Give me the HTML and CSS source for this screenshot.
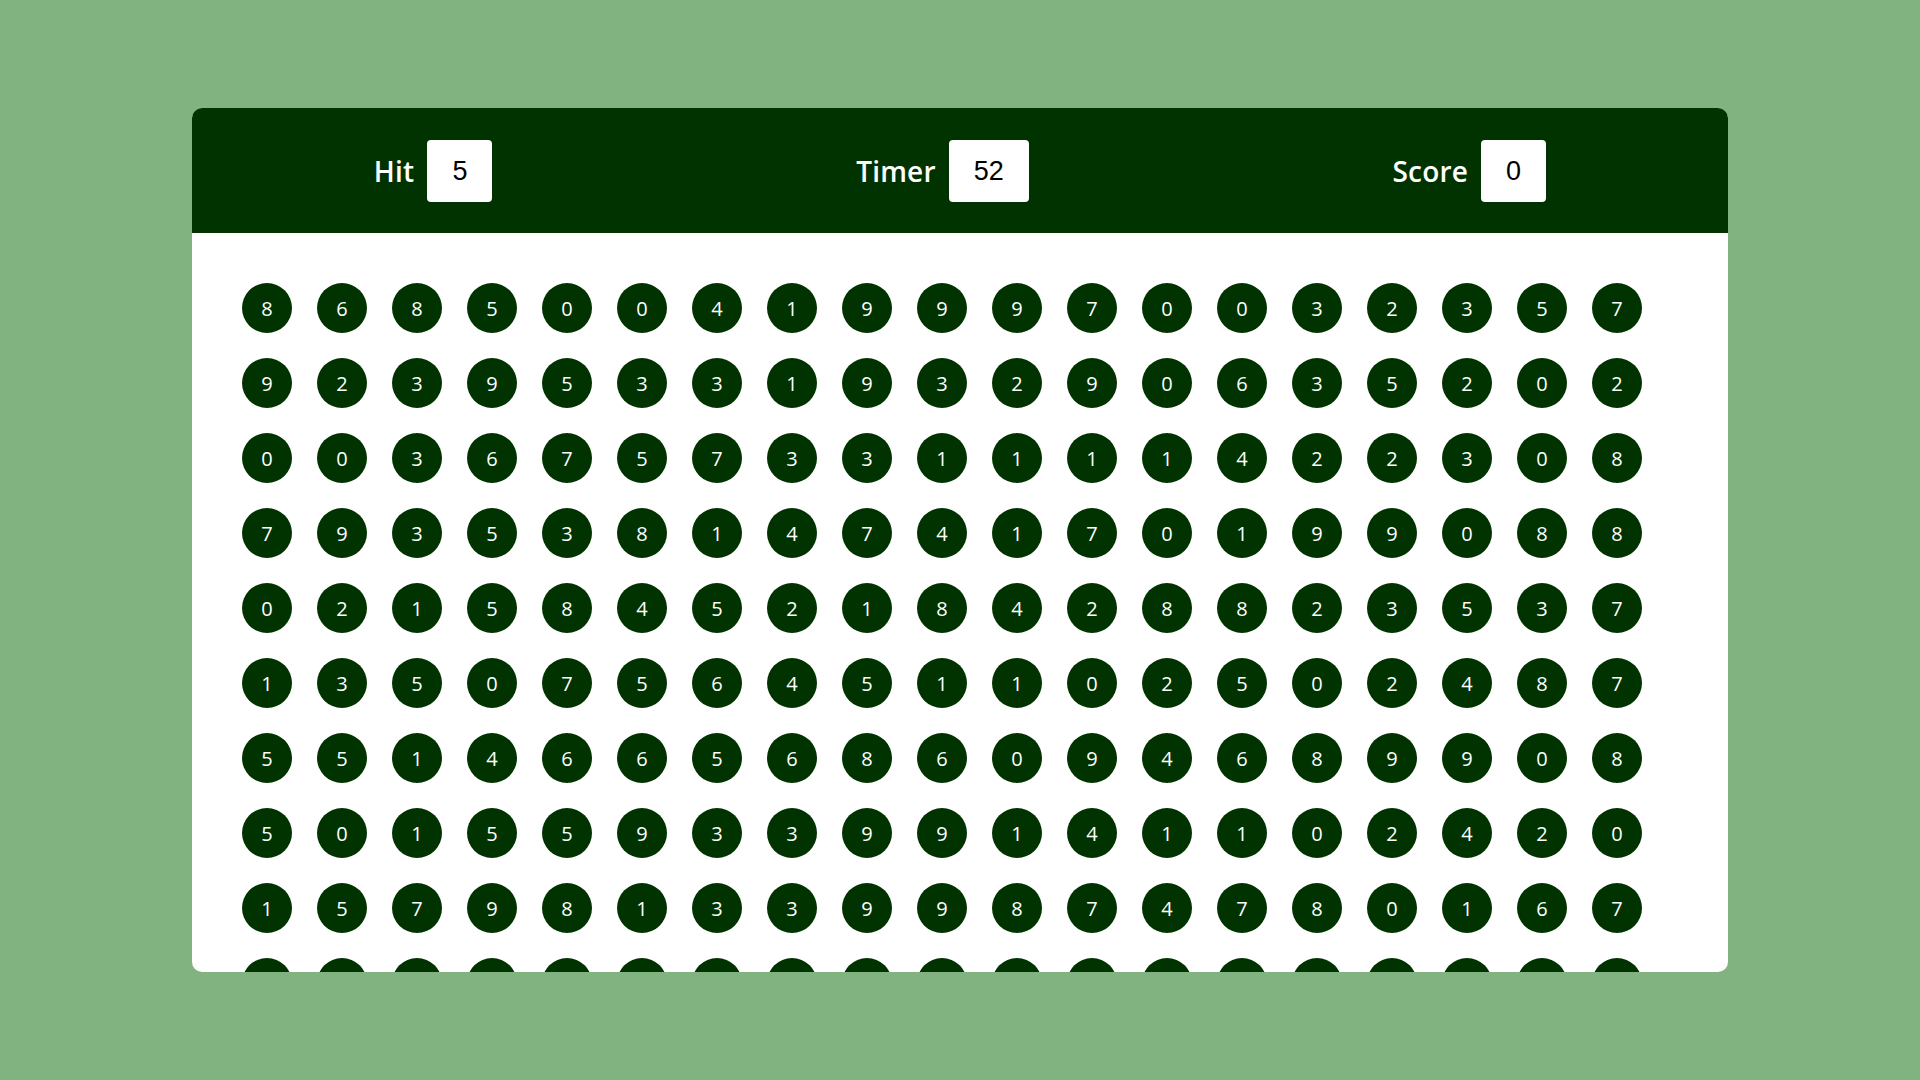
FILE: index.html
```html
<!DOCTYPE html>
<html lang="en">
<head>
<meta charset="utf-8">
<title>Bubble Game</title>
<link rel="stylesheet" href="styles.css">
</head>
<body>
<main class="panel">
  <header class="top">
    <div class="elem"><h2 class="label">Hit</h2><div class="box">5</div></div>
    <div class="elem"><h2 class="label">Timer</h2><div class="box">52</div></div>
    <div class="elem"><h2 class="label">Score</h2><div class="box">0</div></div>
  </header>
  <section class="bottom" id="pbtm"></section>
</main>
<script src="script.js"></script>
</body>
</html>
```
FILE: styles.css
```css
* { margin: 0; padding: 0; box-sizing: border-box; }
html, body { width: 100%; height: 100%; }
body {
  background: #80b380;
  display: flex;
  align-items: center;
  justify-content: center;
  font-family: "Open Sans", "Liberation Sans", sans-serif;
}
.panel {
  width: 1536px;
  height: 864px;
  background: #ffffff;
  border-radius: 10px;
  overflow: hidden;
  display: flex;
  flex-direction: column;
}
.top {
  flex: 0 0 125px;
  background: #003300;
  color: #ffffff;
  display: flex;
  align-items: center;
  justify-content: space-around;
}
.elem {
  display: flex;
  align-items: center;
  gap: 13px;
}
.label {
  font-family: "Open Sans", sans-serif;
  font-weight: 600;
  font-size: 28px;
  line-height: 1;
  letter-spacing: 0.2px;
}
.box {
  background: #ffffff;
  color: #000000;
  font-family: "Liberation Sans", Arial, sans-serif;
  font-size: 27px;
  line-height: 62px;
  height: 62px;
  padding: 0 25px;
  border-radius: 4px;
}
.bottom {
  flex: 1 1 auto;
  padding: 50px;
  display: flex;
  flex-wrap: wrap;
  align-content: flex-start;
  gap: 25px;
  overflow: hidden;
}
.bubble {
  width: 50px;
  height: 50px;
  border-radius: 50%;
  background: #003300;
  color: #ffffff;
  display: flex;
  align-items: center;
  justify-content: center;
  font-family: "Open Sans", sans-serif;
  font-size: 20px;
  font-weight: 400;
}
```
FILE: script.js
```js
var rows = [
  "8685004199970032357",
  "9239533193290635202",
  "0036757331111422308",
  "7935381474170199088",
  "0215845218428823537",
  "1350756451102502487",
  "5514665686094689908",
  "5015593399141102420",
  "1579813399874780167",
  "3624170581936205481"
];
var html = "";
rows.forEach(function (r) {
  for (var i = 0; i < r.length; i++) {
    html += '<div class="bubble">' + r[i] + '</div>';
  }
});
document.getElementById("pbtm").innerHTML = html;
```
